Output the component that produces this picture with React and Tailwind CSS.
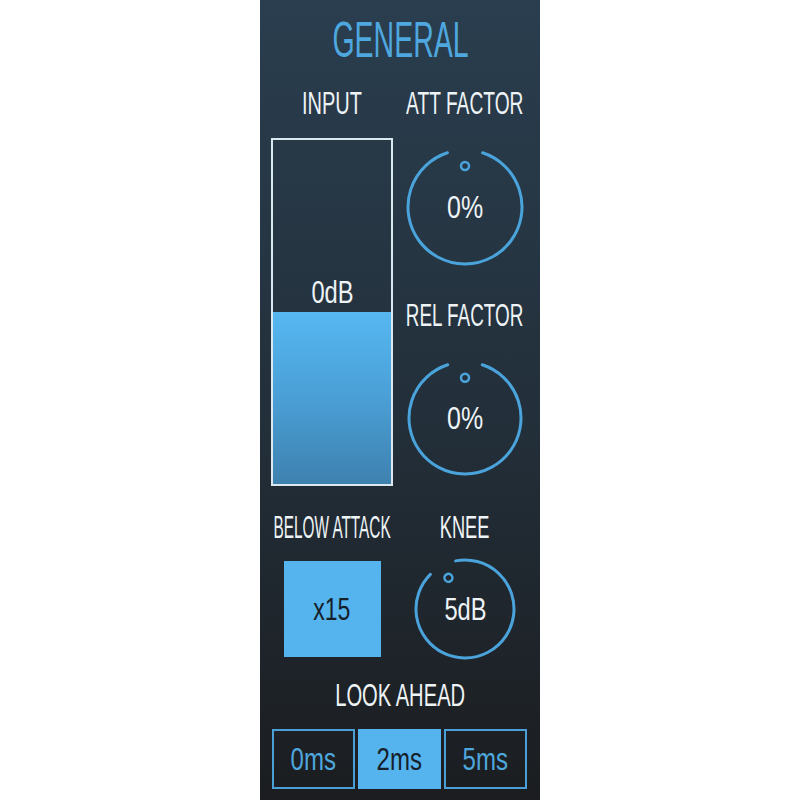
import React from 'react';

const font = { fontFamily: '"Liberation Sans", Arial, sans-serif' };

// condensed label: Arial squeezed horizontally to get the Oswald look
const Label = ({ children, className = '', squeeze }) => (
    <div className={`flex items-center justify-center whitespace-nowrap ${className}`}>
        <span className={`inline-block text-[32px] leading-none text-[#eef3f6] ${squeeze}`}>{children}</span>
    </div>
);

const Knob = ({ size, r, gap, rotate = 0, value, squeeze }) => {
    const c = size / 2;
    const a = (gap * Math.PI) / 180;
    const sx = c + r * Math.sin(a);
    const ex = c - r * Math.sin(a);
    const y = c - r * Math.cos(a);
    const dot = r * 0.72;
    return (
        <div className="relative flex items-center justify-center" style={{ width: size, height: size }}>
            <svg width={size} height={size} viewBox={`0 0 ${size} ${size}`} className="absolute inset-0">
                <g transform={`rotate(${rotate} ${c} ${c})`} fill="none" stroke="#4aa3db">
                    <path d={`M${sx} ${y} A${r} ${r} 0 1 1 ${ex} ${y}`} strokeWidth="3" strokeLinecap="round" />
                    <circle cx={c} cy={c - dot} r="4" strokeWidth="2.5" />
                </g>
            </svg>
            <span className={`relative inline-block text-[32px] leading-none text-[#eef3f6] ${squeeze}`}>{value}</span>
        </div>
    );
};

const App = () => {
    return (
        <div className="w-full h-[800px] bg-white flex justify-center" style={font}>
            <div className="w-[280px] h-[800px] flex flex-col bg-linear-to-b from-[#2a3e4f] via-[#23303b] to-[#1b1d20]">
                {/* title */}
                <div className="h-[80px] flex items-center justify-center">
                    <span className="inline-block scale-x-[0.57] text-[50px] leading-none text-[#4ea7de]">GENERAL</span>
                </div>

                {/* input meter + att / rel knobs */}
                <div className="flex h-[406px]">
                    <div className="w-[144px] flex flex-col items-center">
                        <Label className="h-[46px]" squeeze="scale-x-[0.625]">INPUT</Label>
                        <div className="mt-[12px] w-[122px] h-[348px] border-2 border-[#dbe8ef] flex flex-col justify-end">
                            <div className="h-[40px] flex items-center justify-center">
                                <span className="inline-block scale-x-[0.74] text-[32px] leading-none text-[#eef3f6]">0dB</span>
                            </div>
                            <div className="h-[172px] bg-linear-to-b from-[#56b7f1] via-[#4a9fd6] to-[#3e81af]" />
                        </div>
                    </div>
                    <div className="w-[122px] flex flex-col items-center">
                        <Label className="h-[46px]" squeeze="scale-x-[0.6]">ATT FACTOR</Label>
                        <div className="mt-[21px]">
                            <Knob size={120} r={57} gap={18} value="0%" squeeze="scale-x-[0.78]" />
                        </div>
                        <Label className="mt-[25px] h-[46px]" squeeze="scale-x-[0.59]">REL FACTOR</Label>
                        <div className="mt-[20px]">
                            <Knob size={120} r={56} gap={18} value="0%" squeeze="scale-x-[0.78]" />
                        </div>
                    </div>
                </div>

                {/* below attack + knee */}
                <div className="mt-[18px] flex">
                    <div className="w-[144px] flex flex-col items-center">
                        <Label className="h-[46px]" squeeze="scale-x-[0.48]">BELOW ATTACK</Label>
                        <div className="h-[118px] flex items-center">
                            <div className="w-[97px] h-[96px] bg-[#55b4ee] flex items-center justify-center">
                                <span className="inline-block scale-x-[0.72] text-[32px] leading-none text-[#15202b]">x15</span>
                            </div>
                        </div>
                    </div>
                    <div className="w-[122px] flex flex-col items-center">
                        <Label className="h-[46px]" squeeze="scale-x-[0.57]">KNEE</Label>
                        <div className="h-[118px] flex items-center">
                            <Knob size={104} r={49} gap={17} rotate={-28} value="5dB" squeeze="scale-x-[0.74]" />
                        </div>
                    </div>
                </div>

                {/* look ahead */}
                <Label className="mt-[4px] h-[46px]" squeeze="scale-x-[0.63]">LOOK AHEAD</Label>
                <div className="mt-[11px] flex gap-[3px] px-[12px]">
                    {['0ms', '2ms', '5ms'].map(v => {
                        const active = v === '2ms';
                        return (
                            <div
                                key={v}
                                className={active
                                    ? 'w-[83px] h-[60px] bg-[#55b4ee] border-2 border-[#55b4ee] flex items-center justify-center'
                                    : 'w-[83px] h-[60px] border-2 border-[#4a9fd6] flex items-center justify-center'}
                            >
                                <span className={active
                                    ? 'inline-block scale-x-[0.75] text-[32px] leading-none text-[#15202b]'
                                    : 'inline-block scale-x-[0.75] text-[32px] leading-none text-[#4ea7de]'}
                                >{v}</span>
                            </div>
                        );
                    })}
                </div>
            </div>
        </div>
    );
};

export default App;
